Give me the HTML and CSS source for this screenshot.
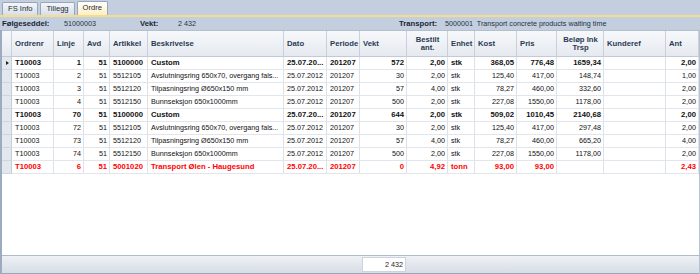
FILE: index.html
```html
<!DOCTYPE html>
<html lang="no">
<head>
    <meta charset="UTF-8">
    <title>Ordre</title>
    <link rel="stylesheet" href="styles.css">
</head>
<body>
    <div class="tabs">
        <div class="tab">FS Info</div>
        <div class="tab">Tillegg</div>
        <div class="tab active">Ordre</div>
    </div>
    <div class="strip"></div>

    <!-- Hode for følgeseddel -->
    <div class="info">
        <span class="lbl w-fs">Følgeseddel:</span>
        <span class="w-nr">51000003</span>
        <span class="lbl w-vekt">Vekt:</span>
        <span class="w-vval">2 432</span>
        <span class="lbl w-tr">Transport:</span>
        <span>5000001&nbsp; Transport concrete products waiting time</span>
    </div>

    <div class="grid">
        <div class="row head">
            <span class="ind"></span>
            <span>Ordrenr</span>
            <span>Linje</span>
            <span>Avd</span>
            <span>Artikkel</span>
            <span>Beskrivelse</span>
            <span>Dato</span>
            <span>Periode</span>
            <span>Vekt</span>
            <span class="two">Bestilt<br>ant.</span>
            <span>Enhet</span>
            <span>Kost</span>
            <span>Pris</span>
            <span class="two">Beløp Ink<br>Trsp</span>
            <span>Kunderef</span>
            <span>Ant</span>
        </div>

        <div class="row bold">
            <span class="ind"><i class="arrow"></i></span>
            <span>T10003</span><span class="r">1</span><span class="r">51</span><span>5100000</span>
            <span>Custom</span><span>25.07.20...</span><span>201207</span><span class="r">572</span>
            <span class="r">2,00</span><span>stk</span><span class="r">368,05</span><span class="r">776,48</span>
            <span class="r">1659,34</span><span></span><span class="r">2,00</span>
        </div>
        <div class="row">
            <span class="ind"></span>
            <span>T10003</span><span class="r">2</span><span class="r">51</span><span>5512105</span>
            <span>Avslutningsring 650x70, overgang fals...</span><span>25.07.2012</span><span>201207</span><span class="r">30</span>
            <span class="r">2,00</span><span>stk</span><span class="r">125,40</span><span class="r">417,00</span>
            <span class="r">148,74</span><span></span><span class="r">1,00</span>
        </div>
        <div class="row">
            <span class="ind"></span>
            <span>T10003</span><span class="r">3</span><span class="r">51</span><span>5512120</span>
            <span>Tilpasningsring Ø650x150 mm</span><span>25.07.2012</span><span>201207</span><span class="r">57</span>
            <span class="r">4,00</span><span>stk</span><span class="r">78,27</span><span class="r">460,00</span>
            <span class="r">332,60</span><span></span><span class="r">2,00</span>
        </div>
        <div class="row">
            <span class="ind"></span>
            <span>T10003</span><span class="r">4</span><span class="r">51</span><span>5512150</span>
            <span>Bunnseksjon 650x1000mm</span><span>25.07.2012</span><span>201207</span><span class="r">500</span>
            <span class="r">2,00</span><span>stk</span><span class="r">227,08</span><span class="r">1550,00</span>
            <span class="r">1178,00</span><span></span><span class="r">2,00</span>
        </div>
        <div class="row bold">
            <span class="ind"></span>
            <span>T10003</span><span class="r">70</span><span class="r">51</span><span>5100000</span>
            <span>Custom</span><span>25.07.20...</span><span>201207</span><span class="r">644</span>
            <span class="r">2,00</span><span>stk</span><span class="r">509,02</span><span class="r">1010,45</span>
            <span class="r">2140,68</span><span></span><span class="r">2,00</span>
        </div>
        <div class="row">
            <span class="ind"></span>
            <span>T10003</span><span class="r">72</span><span class="r">51</span><span>5512105</span>
            <span>Avslutningsring 650x70, overgang fals...</span><span>25.07.2012</span><span>201207</span><span class="r">30</span>
            <span class="r">2,00</span><span>stk</span><span class="r">125,40</span><span class="r">417,00</span>
            <span class="r">297,48</span><span></span><span class="r">2,00</span>
        </div>
        <div class="row">
            <span class="ind"></span>
            <span>T10003</span><span class="r">73</span><span class="r">51</span><span>5512120</span>
            <span>Tilpasningsring Ø650x150 mm</span><span>25.07.2012</span><span>201207</span><span class="r">57</span>
            <span class="r">4,00</span><span>stk</span><span class="r">78,27</span><span class="r">460,00</span>
            <span class="r">665,20</span><span></span><span class="r">4,00</span>
        </div>
        <div class="row">
            <span class="ind"></span>
            <span>T10003</span><span class="r">74</span><span class="r">51</span><span>5512150</span>
            <span>Bunnseksjon 650x1000mm</span><span>25.07.2012</span><span>201207</span><span class="r">500</span>
            <span class="r">2,00</span><span>stk</span><span class="r">227,08</span><span class="r">1550,00</span>
            <span class="r">1178,00</span><span></span><span class="r">2,00</span>
        </div>
        <!-- Transportlinje i rødt -->
        <div class="row bold red">
            <span class="ind"></span>
            <span>T10003</span><span class="r">6</span><span class="r">51</span><span>5001020</span>
            <span>Transport Ølen - Haugesund</span><span>25.07.20...</span><span>201207</span><span class="r">0</span>
            <span class="r">4,92</span><span>tonn</span><span class="r">93,00</span><span class="r">93,00</span>
            <span></span><span></span><span class="r">2,43</span>
        </div>

        <div class="fill"></div>

        <div class="row foot">
            <span class="total">2 432</span>
        </div>
    </div>
</body>
</html>
```

FILE: styles.css
```css
* {
    box-sizing: border-box;
}
body {
    margin: 0;
    width: 700px;
    height: 274px;
    overflow: hidden;
    font-family: "Liberation Sans", Arial, sans-serif;
    font-size: 7.2px;
    color: #111;
    background: #c3cfdf;
}
/* Faner */
.tabs {
    height: 15px;
    display: flex;
    align-items: flex-end;
    gap: 2px;
    padding-left: 2px;
}
.tab {
    height: 13px;
    padding: 0 5px;
    border: 1px solid #97a6ba;
    border-bottom: none;
    border-radius: 2px 2px 0 0;
    background: linear-gradient(#f3f6fa, #d8dfe9);
    line-height: 12px;
    font-size: 7.6px;
    color: #1f2a38;
}
.tab.active {
    height: 14px;
    background: linear-gradient(#ffffff, #fcefc0);
}
.strip {
    height: 2px;
    background: #f5dc8e;
}
/* Info-linje */
.info {
    height: 13px;
    display: flex;
    align-items: center;
    padding-left: 2px;
    color: #25313f;
}
.lbl {
    font-weight: bold;
    font-size: 7.7px;
    color: #1a2636;
}
.w-fs { width: 62px; }
.w-nr { width: 76px; }
.w-vekt { width: 38px; }
.w-vval { width: 221px; }
.w-tr { width: 46px; }
/* Tabell */
.grid {
    height: 244px;
    display: flex;
    flex-direction: column;
    background: #fff;
    border-left: 2px solid #9cabbf;
    border-right: 1px solid #b8c3d2;
}
.row {
    display: grid;
    grid-template-columns: 10px 42px 30px 26px 38px 136px 43px 33px 47px 41px 27px 42px 40px 47px 62px 33px;
    height: 13px;
}
.row > span {
    padding: 0 2px 0 3px;
    border-right: 1px solid #dde2e9;
    border-bottom: 1px solid #e2e6ec;
    line-height: 12px;
    white-space: nowrap;
    overflow: hidden;
}
.row > .r {
    text-align: right;
}
.row > .ind {
    padding: 0;
    background: #e3e8ef;
    border-right: 1px solid #c5cdd9;
    border-bottom: 1px solid #cfd6e0;
    position: relative;
}
.arrow {
    position: absolute;
    left: 4px;
    top: 4px;
    border-left: 3px solid #222;
    border-top: 2px solid transparent;
    border-bottom: 2px solid transparent;
}
.head {
    height: 27px;
    border-top: 1px solid #b4bfce;
    background: linear-gradient(#f6f8fb, #e5e9ef);
}
.row.head > span {
    display: flex;
    align-items: center;
    font-weight: bold;
    font-size: 7.7px;
    color: #2a3b53;
    border-right: 1px solid #c8d0db;
    border-bottom: 1px solid #c1cad6;
    line-height: 8px;
}
.row.head > .two {
    justify-content: center;
    text-align: center;
}
.row.head > .ind {
    background: transparent;
}
.bold {
    font-weight: bold;
    font-size: 7.7px;
}
.red {
    color: #ff0000;
}
.fill {
    flex: 1;
}
/* Bunnlinje med sum */
.row.foot {
    height: 19px;
    padding-top: 1px;
    border-top: 1px solid #afbbcc;
    border-bottom: 1px solid #9aa7b9;
    background: linear-gradient(#eef1f5, #d7dde6);
}
.row.foot > .total {
    grid-column: 9;
    height: 15px;
    margin: 0 1px 0 2px;
    background: #fff;
    border: 1px solid #cdd4de;
    text-align: right;
    line-height: 13px;
    color: #222;
}
```
